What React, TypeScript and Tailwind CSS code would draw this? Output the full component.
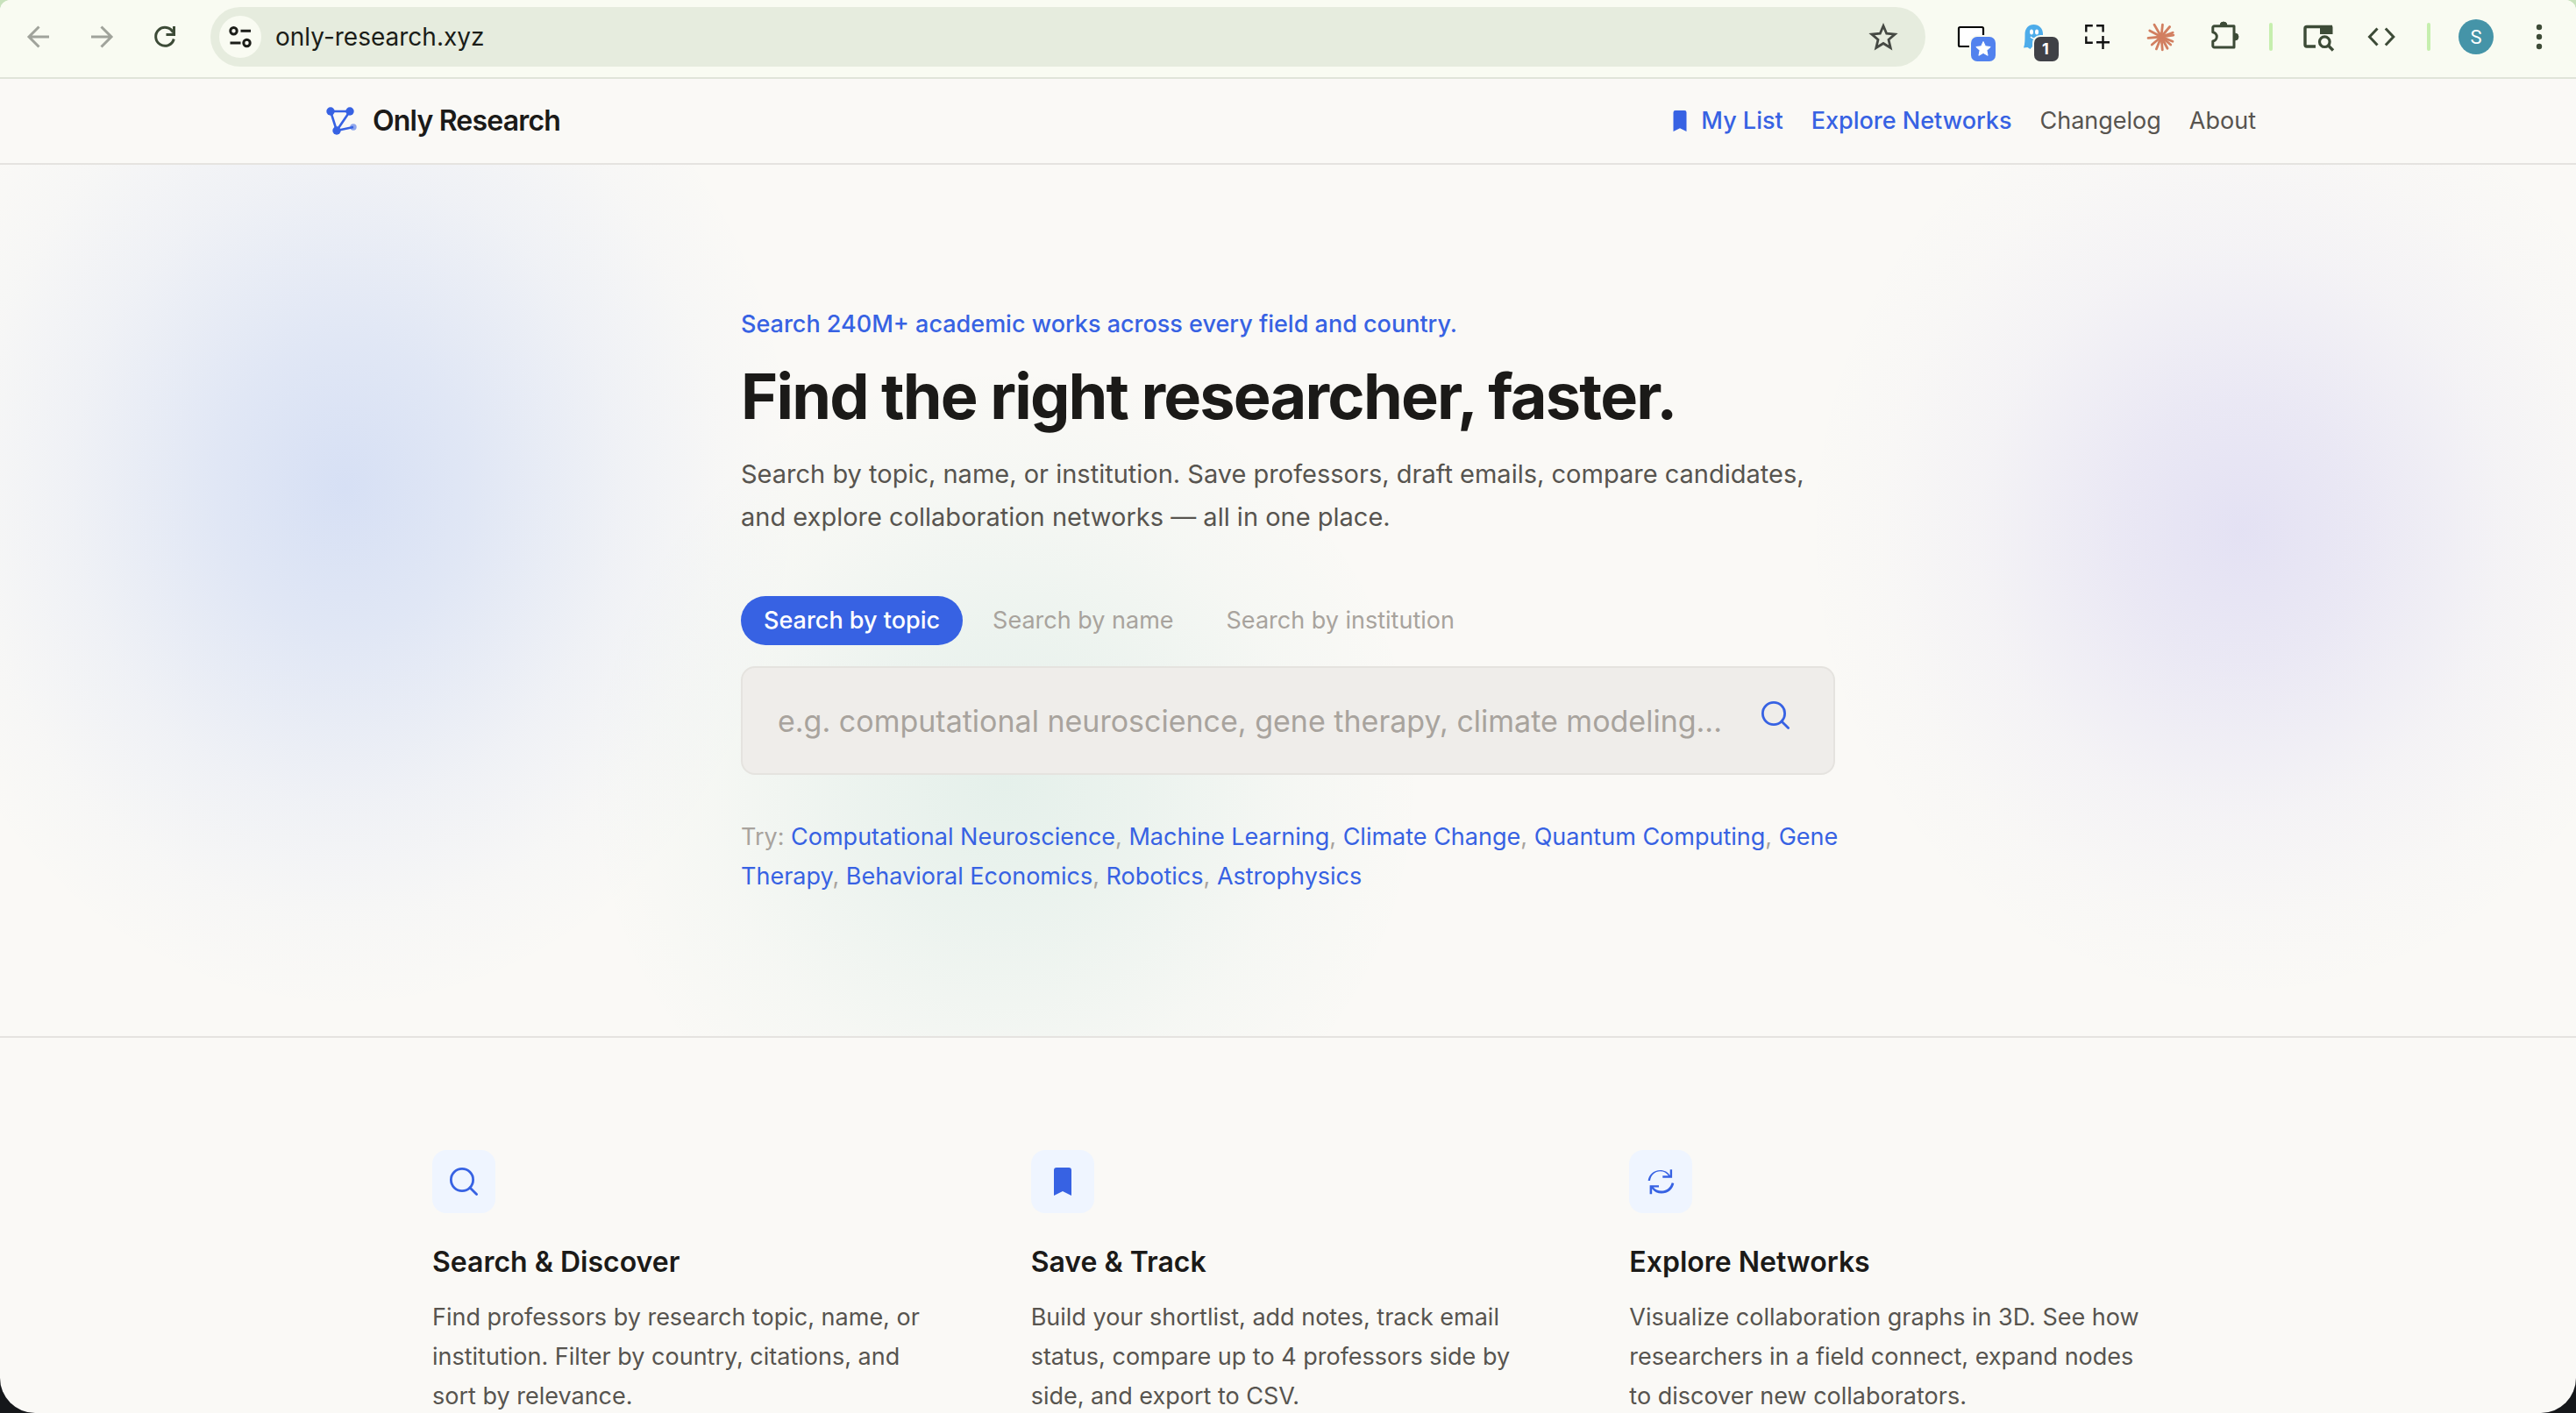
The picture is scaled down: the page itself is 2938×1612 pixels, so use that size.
import { Fragment, useState } from "react"
import type { ReactNode } from "react"

const tabs = [
  { id: "topic", label: "Search by topic", placeholder: "e.g. computational neuroscience, gene therapy, climate modeling..." },
  { id: "name", label: "Search by name", placeholder: "e.g. Geoffrey Hinton" },
  { id: "institution", label: "Search by institution", placeholder: "e.g. Stanford University" },
]

const suggestions = [
  "Computational Neuroscience",
  "Machine Learning",
  "Climate Change",
  "Quantum Computing",
  "Gene Therapy",
  "Behavioral Economics",
  "Robotics",
  "Astrophysics",
]

const features = [
  {
    title: "Search & Discover",
    description:
      "Find professors by research topic, name, or institution. Filter by country, citations, and sort by relevance.",
    icon: <SearchIcon className="size-9" />,
  },
  {
    title: "Save & Track",
    description:
      "Build your shortlist, add notes, track email status, compare up to 4 professors side by side, and export to CSV.",
    icon: <BookmarkIcon className="h-8 w-5" />,
  },
  {
    title: "Explore Networks",
    description:
      "Visualize collaboration graphs in 3D. See how researchers in a field connect, expand nodes to discover new collaborators.",
    icon: <CycleIcon />,
  },
]

function SearchIcon({ className }: { className: string }) {
  return (
    <svg className={className} viewBox="0 0 36 36" fill="none" stroke="currentColor" strokeWidth="2.8" strokeLinecap="round">
      <circle cx="16" cy="16" r="12.6" />
      <path d="M25 25l7.6 7.6" />
    </svg>
  )
}

function BookmarkIcon({ className }: { className: string }) {
  return (
    <svg className={className} viewBox="0 0 20 32" fill="currentColor">
      <path d="M3 0h14a3 3 0 0 1 3 3v29l-10-5-10 5V3a3 3 0 0 1 3-3z" />
    </svg>
  )
}

function CycleIcon() {
  return (
    <svg className="size-9" viewBox="18 18 36 36" fill="currentColor">
      <path d="M21.6 35C22.5 28 28 23 35.5 23c5 0 9 2.3 11.2 6v-6.7h2.4v9.4H38.3v-2.4H45c-2.2-3.3-5.5-5.1-9.5-5.1-6 0-10.6 4.3-11.5 10.8z" />
      <path d="M51.3 38C49.8 45 44.2 49.5 37 49.5c-4.5 0-8.3-2-10.8-5.3v6.1h-2.6V40.2H34v2.4h-6.3c2.3 2.7 5.3 4 9 4 5.8 0 10.4-3.5 12-9.4z" />
    </svg>
  )
}

function LogoIcon() {
  return (
    <svg className="size-12 text-[#3762e3]" viewBox="0 0 48 48" fill="currentColor" stroke="none">
      <path d="M12 13h22L19 35z" fill="none" stroke="currentColor" strokeWidth="2.6" />
      <path d="M19 35l19-4" stroke="currentColor" strokeWidth="2.6" />
      <circle cx="12" cy="13" r="4.7" />
      <circle cx="34" cy="13" r="4.7" />
      <circle cx="19" cy="35" r="4.7" />
      <circle cx="38" cy="31" r="3.7" opacity="0.55" />
    </svg>
  )
}

function ToolbarButton({ label, children }: { label: string; children: ReactNode }) {
  return (
    <button type="button" aria-label={label} className="size-12 shrink-0 text-[#3d4b37]">
      <svg className="size-12 overflow-visible" viewBox="0 0 48 48" fill="none" stroke="currentColor" strokeWidth="3">
        {children}
      </svg>
    </button>
  )
}

function Divider() {
  return <div className="mx-1 h-8 w-1 shrink-0 rounded-full bg-[#c6efae]" />
}

// [angle, length] of each ray
const rays = [
  [-8, 15], [22, 15], [40, 15], [62, 16], [85, 16], [112, 16], [140, 15], [175, 16], [208, 16], [240, 17], [276, 15], [310, 16], [340, 15],
]

function BrowserToolbar() {
  return (
    <div className="flex shrink-0 items-center gap-6 border-b-2 border-[#e0e4d9] bg-[#f9fbf2] pt-2 pr-[18px] pb-3 pl-5">
      <ToolbarButton label="Back">
        <path d="M36 24H14M24.5 12.5L13 24l11.5 11.5" stroke="#a0a39b" />
      </ToolbarButton>
      <ToolbarButton label="Forward">
        <path d="M12 24h22M23.5 12.5L35 24 23.5 35.5" stroke="#a0a39b" />
      </ToolbarButton>
      <ToolbarButton label="Reload">
        <path d="M34.3 26.5A10.5 10.5 0 1 1 33.5 19M34.5 12v9.5h-9" />
      </ToolbarButton>

      <div className="ml-1 flex h-[68px] flex-1 items-center rounded-full bg-[#e6ecde] pr-6 pl-[10px]">
        <button type="button" aria-label="View site information" className="size-12 rounded-full bg-[#f9fbf2] text-[#1b1d18]">
          <svg className="size-12" viewBox="0 0 48 48" fill="none" stroke="currentColor" strokeWidth="3">
            <circle cx="16.5" cy="17.3" r="3.7" />
            <path d="M24.5 17.3H36M12.5 31h12" />
            <circle cx="31.5" cy="31" r="3.7" />
          </svg>
        </button>
        <input
          aria-label="Address"
          defaultValue="only-research.xyz"
          className="ml-4 min-w-0 flex-1 bg-transparent text-[28px] text-[#1b1d18] outline-none"
        />
        <button type="button" aria-label="Bookmark this tab" className="size-12 text-[#454943]">
          <svg className="size-12" viewBox="0 0 48 48" fill="none" stroke="currentColor" strokeWidth="2.8">
            <path d="M24 11.5l3.7 8.7 9.5.8-7.2 6.2 2.2 9.3-8.2-5-8.2 5 2.2-9.3-7.2-6.2 9.5-.8z" />
          </svg>
        </button>
      </div>

      <div className="ml-1 flex items-center gap-6">
        <ToolbarButton label="Picture extension">
          <rect x="10" y="13" width="28" height="22" rx="1.5" fill="#fff" stroke="#000" strokeWidth="2.2" />
          <rect x="22" y="22" width="32" height="32" rx="9" fill="#f9fbf2" stroke="none" />
          <rect x="24" y="24" width="28" height="28" rx="7" fill="#5282ee" stroke="none" />
          <path
            d="M38 29.5l2.4 5.3 5.8.7-4.3 4 1.2 5.8-5.1-2.9-5.1 2.9 1.2-5.8-4.3-4 5.8-.7z"
            fill="#fff"
            stroke="#fff"
            strokeWidth="1"
            strokeLinejoin="round"
          />
        </ToolbarButton>
        <ToolbarButton label="Ghost extension">
          <path
            d="M13.5 21C13.5 14.5 17.5 10 23.5 10S34 14.5 34 20.5V37l-4.5-2-3.5 2.5-3.5-3-3 3.5-3-2-4.5.5c1.5-4 1.5-9 1.5-15.5z"
            fill="#4dacea"
            stroke="none"
          />
          <ellipse cx="21" cy="18.5" rx="2" ry="3" fill="#fff" stroke="none" />
          <ellipse cx="27" cy="18.5" rx="2" ry="3" fill="#fff" stroke="none" />
          <path d="M20 24c2 2.5 5 2.5 7 0" stroke="#fff" strokeWidth="1.5" />
          <rect x="22" y="22" width="32" height="32" rx="9" fill="#f9fbf2" stroke="none" />
          <rect x="24" y="24" width="28" height="28" rx="7" fill="#404147" stroke="none" />
          <text x="37" y="44" fontSize="18" fontWeight="700" textAnchor="middle" fill="#fff" stroke="none">
            1
          </text>
        </ToolbarButton>
        <ToolbarButton label="Capture extension">
          <path
            d="M11.3 18.5v-7.2h7.5M23 11.3h7.6v7.2M11.3 23.5v7.2h7.5M23 30.3h15M30.5 23v15"
            stroke="#111"
            strokeWidth="2.4"
          />
        </ToolbarButton>
        <ToolbarButton label="Assistant extension">
          <g stroke="#d27f60" strokeWidth="2.8" strokeLinecap="round">
            {rays.map(([angle, length]) => (
              <path key={angle} d={`M25 24h${length - 1}`} transform={`rotate(${angle} 25 24)`} />
            ))}
          </g>
        </ToolbarButton>
        <ToolbarButton label="Extensions">
          <path
            d="M13.5 11.8H36V36H13.5a1.7 1.7 0 0 1-1.7-1.7V29a5.2 5.2 0 0 0 0-10.3v-5.2a1.7 1.7 0 0 1 1.7-1.7z"
            strokeLinejoin="round"
          />
          <path d="M20 11a4 4 0 0 1 8 0zM37 20a4 4 0 0 1 0 8z" fill="currentColor" strokeWidth="1" />
        </ToolbarButton>
        <Divider />
        <ToolbarButton label="Search side panel">
          <path d="M40 12.5H11a2 2 0 0 0-2 2V33a2 2 0 0 0 2 2h10" strokeWidth="3.4" />
          <path d="M26 11h12.5a2 2 0 0 1 2 2v8H26z" fill="currentColor" stroke="none" />
          <circle cx="31.3" cy="29.7" r="5.8" strokeWidth="3.2" />
          <path d="M35.5 34l5.5 5.5" strokeWidth="3.4" />
        </ToolbarButton>
        <ToolbarButton label="Developer tools">
          <path d="M19.5 14.5l-9 9.5 9 9.5M28.8 14.5l9 9.5-9 9.5" />
        </ToolbarButton>
        <Divider />
        <button type="button" aria-label="Profile" className="flex size-12 items-center justify-center">
          <span className="flex size-10 items-center justify-center rounded-full bg-[#4594a8] font-[Roboto,sans-serif] text-[22px] text-white">
            S
          </span>
        </button>
        <ToolbarButton label="Menu">
          <g fill="currentColor" stroke="none">
            <circle cx="24" cy="13" r="3.2" />
            <circle cx="24" cy="24" r="3.2" />
            <circle cx="24" cy="35" r="3.2" />
          </g>
        </ToolbarButton>
      </div>
    </div>
  )
}

function Navbar() {
  return (
    <header className="shrink-0 border-b-2 border-[#e5e3e0] bg-[#faf9f6]">
      <div className="mx-auto flex h-24 max-w-[2400px] items-center justify-between px-24">
        <a href="#" className="flex items-center gap-3 text-[32px] font-semibold tracking-tight text-[#1b1a18]">
          <LogoIcon />
          Only Research
        </a>
        <nav className="flex items-center gap-8 text-[27px] text-[#57544f]">
          <a href="#list" className="flex items-center gap-4 font-medium text-[#3762e3]">
            <BookmarkIcon className="h-6 w-4" />
            My List
          </a>
          <a href="#networks" className="font-medium text-[#3762e3]">
            Explore Networks
          </a>
          <a href="#changelog">Changelog</a>
          <a href="#about">About</a>
        </nav>
      </div>
    </header>
  )
}

function Hero() {
  const [active, setActive] = useState("topic")
  const current = tabs.find((tab) => tab.id === active) ?? tabs[0]

  return (
    <section className="shrink-0 border-b-2 border-[#e5e3e0] bg-[radial-gradient(520px_600px_at_13.4%_37%,rgba(40,100,238,0.17),rgba(40,100,238,0.12)_28%,rgba(40,95,238,0.05)_60%,rgba(40,95,238,0.015)_82%,transparent),radial-gradient(500px_540px_at_87%_42%,rgba(100,90,230,0.15),rgba(100,90,230,0.105)_28%,rgba(100,90,230,0.04)_60%,rgba(100,90,230,0.01)_82%,transparent),radial-gradient(480px_480px_at_39%_71%,rgba(16,150,120,0.09),rgba(16,150,120,0.06)_35%,rgba(16,150,120,0.02)_70%,transparent)]">
      <div className="mx-auto max-w-[1440px] px-24 py-40">
        <p className="text-[27px] leading-[44px] font-medium text-[#3762e3]">
          Search 240M+ academic works across every field and country.
        </p>
        <h1 className="mt-5 text-[72px] leading-[80px] font-bold tracking-tight whitespace-nowrap text-[#1b1a18]">
          Find the right researcher, faster.
        </h1>
        <p className="mt-6 text-[29px] leading-[49px] text-[#57544f]">
          Search by topic, name, or institution. Save professors, draft emails, compare candidates, and explore
          collaboration networks — all in one place.
        </p>

        <div className="mt-[66px] flex gap-2 text-[27px]">
          {tabs.map((tab) => (
            <button
              key={tab.id}
              type="button"
              onClick={() => setActive(tab.id)}
              className={`h-14 rounded-full px-[26px] whitespace-nowrap ${
                tab.id === active ? "bg-[#3762e3] font-medium text-white" : "text-[#a8a39d]"
              }`}
            >
              {tab.label}
            </button>
          ))}
        </div>

        <form
          onSubmit={(e) => e.preventDefault()}
          className="mt-6 flex h-[124px] items-center rounded-2xl border-2 border-[#e5e3df] bg-[#efedea] pr-12 pl-10"
        >
          <input
            aria-label={current.label}
            placeholder={current.placeholder}
            className="min-w-0 flex-1 bg-transparent text-[34px] text-[#1b1a18] outline-none placeholder:text-[#a8a39d]"
          />
          <button type="submit" aria-label="Search" className="mb-3 ml-6 text-[#3762e3]">
            <SearchIcon className="size-9" />
          </button>
        </form>

        <p className="mt-12 -mr-3 text-[27px] leading-[45px] text-[#a8a39d]">
          Try:{" "}
          {suggestions.map((topic, i) => (
            <Fragment key={topic}>
              {i > 0 && ", "}
              <a href="#search" className="text-[#3762e3]">
                {topic}
              </a>
            </Fragment>
          ))}
        </p>
      </div>
    </section>
  )
}

function Features() {
  return (
    <section className="shrink-0">
      <div className="mx-auto grid max-w-[2144px] grid-cols-3 gap-24 px-24 py-32">
        {features.map((feature) => (
          <div key={feature.title}>
            <div className="flex size-[72px] items-center justify-center rounded-2xl bg-[#eff5ff] text-[#3762e3]">
              {feature.icon}
            </div>
            <h3 className="mt-8 text-[32px] leading-[48px] font-semibold text-[#1b1a18]">{feature.title}</h3>
            <p className="mt-4 text-[27px] leading-[45px] text-[#57544f]">{feature.description}</p>
          </div>
        ))}
      </div>
    </section>
  )
}

export default function App() {
  return (
    <div className="h-screen bg-linear-to-b from-[#c8e2bc] from-50% to-[#15171a] to-50% font-[Inter,sans-serif]">
      <div className="flex h-full flex-col overflow-hidden rounded-t-xl rounded-b-[40px] bg-[#faf9f6]">
        <BrowserToolbar />
        <Navbar />
        <Hero />
        <Features />
      </div>
    </div>
  )
}
